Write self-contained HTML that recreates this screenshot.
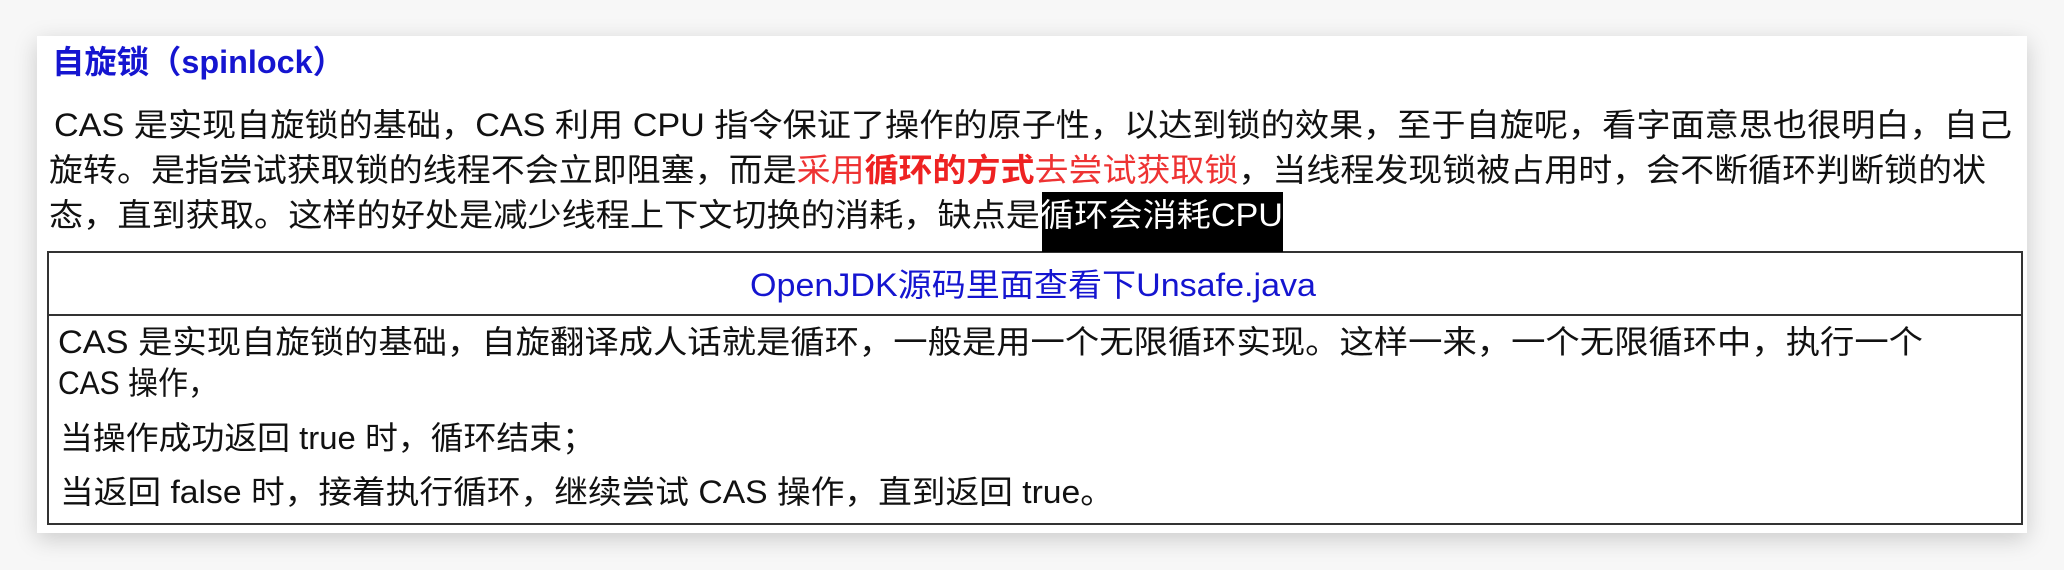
<!DOCTYPE html>
<html><head><meta charset="utf-8"><style>
html,body{margin:0;padding:0;width:2064px;height:570px;overflow:hidden;background:#f7f7f7;}
.panel{position:absolute;left:37px;top:36px;width:1990px;height:497px;background:#fff;box-shadow:0 6px 22px rgba(0,0,0,0.18);}
.t{position:absolute;white-space:nowrap;font-family:"Liberation Sans","Noto Sans CJK SC",sans-serif;font-size:32px;line-height:30px;color:#111;transform-origin:0 50%;}
.blue{color:#1515d0;}
.red{color:#e33;}
.rb{color:#e22;font-weight:bold;}
.tbl{position:absolute;left:47px;top:251px;width:1972px;height:270px;border:2px solid #333;}
.hl{position:absolute;left:10px;right:0;top:61px;border-top:2px solid #333;}
.box{position:absolute;left:1042px;top:192px;width:241px;height:60px;background:#000;}
</style></head><body>
<div class="panel"></div>
<div class="tbl"><div class="hl" style="left:0"></div></div>
<div class="box"></div>
<div class="t blue" style="left:52px;top:47px;font-weight:bold;--w:293">自旋锁（spinlock）</div>
<div class="t" style="left:54px;top:110px;--w:1958">CAS 是实现自旋锁的基础，CAS 利用 CPU 指令保证了操作的原子性，以达到锁的效果，至于自旋呢，看字面意思也很明白，自己</div>
<div class="t" style="left:49px;top:155px;--w:1937">旋转。是指尝试获取锁的线程不会立即阻塞，而是<span class="red">采用</span><span class="rb">循环的方式</span><span class="red">去尝试获取锁</span>，当线程发现锁被占用时，会不断循环判断锁的状</div>
<div class="t" style="left:49px;top:200px;--w:1234">态，直到获取。这样的好处是减少线程上下文切换的消耗，缺点是<span style="color:#fff">循环会消耗CPU</span></div>
<div class="t blue" style="left:750px;top:270px;--w:566">OpenJDK源码里面查看下Unsafe.java</div>
<div class="t" style="left:58px;top:327px;--w:1865">CAS 是实现自旋锁的基础，自旋翻译成人话就是循环，一般是用一个无限循环实现。这样一来，一个无限循环中，执行一个</div>
<div class="t" style="left:58px;top:368px;--w:160">CAS 操作，</div>
<div class="t" style="left:60px;top:423px;--w:535">当操作成功返回 true 时，循环结束；</div>
<div class="t" style="left:60px;top:477px;--w:1054">当返回 false 时，接着执行循环，继续尝试 CAS 操作，直到返回 true。</div>
<script>
document.querySelectorAll('.t').forEach(function(el){
  var w=parseFloat(getComputedStyle(el).getPropertyValue('--w'));
  if(w){var r=el.getBoundingClientRect().width; if(r>0) el.style.transform='scaleX('+(w/r)+')';}
});
</script>
</body></html>
